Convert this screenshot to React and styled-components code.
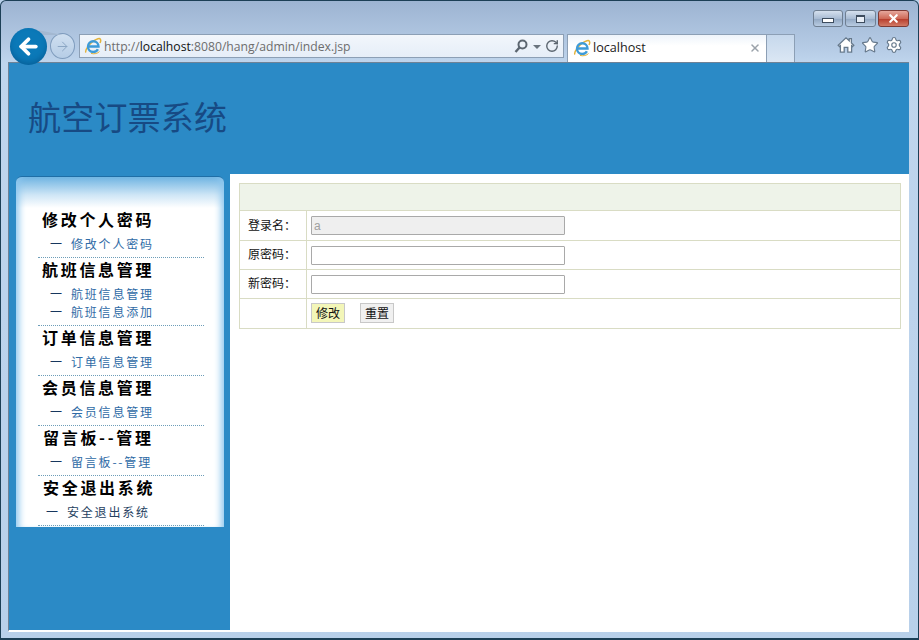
import React from 'react'
import styled, { createGlobalStyle } from 'styled-components'
import { ArrowLeft, ArrowRight, RotateCw, Settings, Star, X } from 'lucide-react'

const menu = [
    { title: '修改个人密码', links: ['修改个人密码'] },
    { title: '航班信息管理', links: ['航班信息管理', '航班信息添加'] },
    { title: '订单信息管理', links: ['订单信息管理'] },
    { title: '会员信息管理', links: ['会员信息管理'] },
    { title: '留言板--管理', links: ['留言板--管理'], nudge: 1 },
    { title: '安全退出系统', links: ['安全退出系统'], nudge: 1, linkNudge: -4, dark: true },
]

const IeLogo = ({ size = 18 }) => (
    <svg width={size} height={size} viewBox="0 0 18 18" fill="none">
        <path d="M2 15.5C0.5 13.5 6 4.5 14 1.8C16.5 1 17.5 3 16 6" stroke="#e2b33c" strokeWidth="1.5" />
        <path d="M4 9.5H14.5C14.5 6.5 12.2 4.3 9.3 4.3C6.3 4.3 4 6.7 4 9.7C4 12.8 6.3 15 9.3 15C11.3 15 13 14 13.9 12.3" stroke="#3d9bd8" strokeWidth="2.4" />
        <path d="M7 16.4C10 17.4 14 16.4 15.5 14.5" stroke="#e2b33c" strokeWidth="1" />
    </svg>
)

const HomeIcon = () => (
    <svg width="18" height="18" viewBox="0 0 18 18" fill="#fff" stroke="#66798c" strokeWidth="1.3">
        <path d="M1.2 9.2L9 1.8L12.2 4.8V2.6H14.4V6.9L16.8 9.2L15.5 10.5L14.6 9.7V16.2H10.8V11.4H7.2V16.2H3.4V9.7L2.5 10.5Z" />
    </svg>
)

export default function App() {
    return (
        <Frame>
            <GlobalStyle />
            <TitleBar>
                <WindowButton><MinGlyph /></WindowButton>
                <WindowButton $wide><MaxGlyph /></WindowButton>
                <CloseButton><X size={13} strokeWidth={4} color="#fff" /></CloseButton>
            </TitleBar>
            <NavBar>
                <BackButton><ArrowLeft size={25} strokeWidth={3.6} color="#fff" /></BackButton>
                <ForwardButton><ArrowRight size={15} strokeWidth={1.6} color="#8ba6c4" /></ForwardButton>
                <AddressBar>
                    <IeLogo />
                    <Url>http://<b>localhost</b>:8080/hang/admin/index.jsp</Url>
                    <AddressTools>
                        <svg width="16" height="16" viewBox="0 0 16 16" fill="none">
                            <circle cx="9.5" cy="6.5" r="4" stroke="#5c6670" strokeWidth="2" />
                            <path d="M6.5 9.5L2.5 14" stroke="#5c6670" strokeWidth="2.4" />
                        </svg>
                        <DropArrow />
                        <RotateCw size={14} strokeWidth={2.4} color="#5c6670" />
                    </AddressTools>
                </AddressBar>
                <Tab>
                    <IeLogo />
                    <TabTitle>localhost</TabTitle>
                    <X size={12} strokeWidth={3} color="#9aa2aa" />
                </Tab>
                <NewTab />
                <Tools>
                    <HomeIcon />
                    <Star size={18} strokeWidth={1.5} color="#66798c" fill="#fff" />
                    <Settings size={18} strokeWidth={1.5} color="#66798c" fill="#fff" />
                </Tools>
            </NavBar>
            <Page>
                <Header>航空订票系统</Header>
                <Body>
                    <Sidebar>
                        <Panel>
                            {menu.map((group) => (
                                <Group key={group.title}>
                                    <GroupTitle $nudge={group.nudge}>{group.title}</GroupTitle>
                                    {group.links.map((link) => (
                                        <SubItem key={link} $nudge={group.linkNudge}>
                                            <Dash>一</Dash>
                                            <SubLink $dark={group.dark}>{link}</SubLink>
                                        </SubItem>
                                    ))}
                                </Group>
                            ))}
                        </Panel>
                    </Sidebar>
                    <Main>
                        <FormTable>
                            <colgroup>
                                <col width="67" />
                                <col />
                            </colgroup>
                            <tbody>
                                <tr><HeadCell colSpan={2} /></tr>
                                <Row $h={30}>
                                    <LabelCell>登录名：</LabelCell>
                                    <FieldCell><TextInput value="a" disabled readOnly /></FieldCell>
                                </Row>
                                <Row $h={29}>
                                    <LabelCell>原密码：</LabelCell>
                                    <FieldCell><TextInput type="password" /></FieldCell>
                                </Row>
                                <Row $h={29}>
                                    <LabelCell>新密码：</LabelCell>
                                    <FieldCell><TextInput type="password" /></FieldCell>
                                </Row>
                                <Row $h={30}>
                                    <LabelCell />
                                    <FieldCell>
                                        <ActionButton $primary>修改</ActionButton>
                                        <ActionButton>重置</ActionButton>
                                    </FieldCell>
                                </Row>
                            </tbody>
                        </FormTable>
                    </Main>
                </Body>
            </Page>
        </Frame>
    )
}

const GlobalStyle = createGlobalStyle`
    html, body {
        margin: 0;
        padding: 0;
        width: 919px;
        height: 640px;
        overflow: hidden;
        background: #b8d0ea;
    }
`

const Frame = styled.div`
    box-sizing: border-box;
    width: 919px;
    height: 640px;
    display: flex;
    flex-direction: column;
    padding: 0 9px 6px 7px;
    border: 1px solid #1c3f56;
    border-bottom-width: 2px;
    border-radius: 6px 6px 0 0;
    margin: 0;
    background: linear-gradient(#9db4d2 0, #b4cae4 45px, #bfd5ed 62px, #b8d0ea 100%);
    font-family: "Noto Sans CJK SC", sans-serif;
`

const TitleBar = styled.div`
    height: 26px;
    flex: none;
    padding-top: 9px;
    display: flex;
    justify-content: flex-end;
    gap: 2px;
`

const WindowButton = styled.div`
    box-sizing: border-box;
    width: ${(p) => (p.$wide ? 31 : 30)}px;
    height: 17px;
    display: flex;
    align-items: center;
    justify-content: center;
    border: 1px solid #6f7f92;
    border-radius: 3px;
    background: linear-gradient(#d5e0ee, #a9bcd4 50%, #93a9c4 55%, #b9cce2);
`

const CloseButton = styled(WindowButton)`
    width: 31px;
    border-color: #7d3a34;
    background: linear-gradient(#e6a79c, #cf6a58 50%, #b83f2e 55%, #d27a66);
`

const MinGlyph = styled.span`
    width: 10px;
    height: 3px;
    margin-top: 4px;
    border: 1px solid #3d4c5e;
    background: #fff;
`

const MaxGlyph = styled.span`
    width: 7px;
    height: 5px;
    border: 1px solid #3d4c5e;
    border-top-width: 2px;
    background: #e8eef6;
`

const NavBar = styled.div`
    height: 28px;
    flex: none;
    display: flex;
    align-items: flex-start;
    margin: -2px 0 0 2px;
`

const BackButton = styled.div`
    position: relative;
    box-sizing: border-box;
    width: 37px;
    height: 37px;
    flex: none;
    margin-top: -6px;
    border-radius: 50%;
    display: flex;
    align-items: center;
    justify-content: center;
    background: #0b79b8;
    box-shadow: inset 0 -3px 5px rgba(0, 60, 110, 0.35);
    z-index: 1;
`

const ForwardButton = styled.div`
    position: relative;
    box-sizing: border-box;
    width: 25px;
    height: 26px;
    flex: none;
    margin: -1px 4px 0 3px;
    border-radius: 50%;
    display: flex;
    align-items: center;
    justify-content: center;
    border: 1px solid #7f9cbd;
    background: linear-gradient(#cfdff0, #b6cde6);

    &::before {
        content: '';
        position: absolute;
        left: -24px;
        top: -6px;
        width: 36px;
        height: 7px;
        background: #a3b8d1;
        clip-path: polygon(0 0, 100% 100%, 0 100%);
    }
`

const AddressBar = styled.div`
    box-sizing: border-box;
    width: 485px;
    height: 24px;
    flex: none;
    display: flex;
    align-items: center;
    gap: 2px;
    padding: 0 4px 0 4px;
    border: 1px solid #8c9fb5;
    background: linear-gradient(#f2f6fb, #e6eef8);
`

const Url = styled.span`
    flex: 1;
    font: 12.2px "Open Sans", sans-serif;
    color: #6d6d6d;

    b {
        font-weight: 400;
        color: #111;
    }
`

const AddressTools = styled.div`
    display: flex;
    align-items: center;
    gap: 4px;
`

const DropArrow = styled.span`
    width: 0;
    height: 0;
    margin-top: 2px;
    border-left: 4px solid transparent;
    border-right: 4px solid transparent;
    border-top: 4px solid #6a747e;
`

const Tab = styled.div`
    box-sizing: border-box;
    width: 200px;
    height: 28px;
    flex: none;
    margin-left: 3px;
    padding: 0 5px 2px 5px;
    display: flex;
    align-items: center;
    gap: 2px;
    border: 1px solid #8c9fb5;
    border-bottom: 0;
    background: linear-gradient(#eef4fb, #fff 40%);
`

const TabTitle = styled.span`
    flex: 1;
    font: 12.6px "Open Sans", sans-serif;
    color: #1a1a1a;
`

const NewTab = styled.div`
    box-sizing: border-box;
    width: 28px;
    height: 28px;
    flex: none;
    border: 1px solid #8c9fb5;
    border-left: 0;
    border-bottom: 0;
    background: linear-gradient(#c6d8ec, #dbe7f4);
`

const Tools = styled.div`
    display: flex;
    align-items: center;
    gap: 6px;
    height: 22px;
    margin-left: 42px;
`

const Page = styled.div`
    flex: 1;
    min-height: 0;
    display: flex;
    flex-direction: column;
    border-top: 1px solid #6f8296;
    border-left: 1px solid #6f8296;
    border-bottom: 2px solid #fff;
`

const Header = styled.div`
    box-sizing: border-box;
    height: 111px;
    flex: none;
    padding: 29px 0 0 19px;
    background: #2b8ac6;
    color: #174a84;
    font-size: 33px;
    font-weight: 400;
    line-height: 48px;
    letter-spacing: 0.2px;
`

const Body = styled.div`
    flex: 1;
    min-height: 0;
    display: flex;
`

const Sidebar = styled.div`
    box-sizing: border-box;
    width: 221px;
    flex: none;
    padding: 2px 6px 0 7px;
    background: #2b8ac6;
`

const Panel = styled.div`
    box-sizing: border-box;
    width: 208px;
    height: 351px;
    padding: 31px 20px 0 22px;
    border-radius: 6px 6px 0 0;
    border-top: 1px solid #1f6ea6;
    background: linear-gradient(#6fb4e2, #cfe6f6 18px, #fff 31px);
    box-shadow: inset 8px 0 7px -5px #8cc6ee, inset -8px 0 7px -5px #8cc6ee;
`

const Group = styled.div`
    display: flex;
    flex-direction: column;
    padding-bottom: 4px;
    border-bottom: 1px dotted #6d9db8;
`

const GroupTitle = styled.div`
    height: 26px;
    margin-left: ${(p) => 4 + (p.$nudge || 0)}px;
    font-size: 16px;
    font-weight: 700;
    line-height: 22px;
    letter-spacing: 2.7px;
    color: #000;
    white-space: nowrap;
`

const SubItem = styled.div`
    height: 18px;
    display: flex;
    align-items: center;
    margin-left: ${(p) => 12 + (p.$nudge || 0)}px;
    font-size: 12px;
    line-height: 18px;

    &:nth-child(2) {
        margin-top: 1px;
    }
`

const Dash = styled.span`
    width: 21px;
    flex: none;
    color: #17375e;
`

const SubLink = styled.span`
    letter-spacing: 1.8px;
    color: ${(p) => (p.$dark ? '#25415f' : '#2f6ba6')};
    white-space: nowrap;
`

const Main = styled.div`
    flex: 1;
    padding: 9px 8px 0 9px;
    background: #fff;
`

const FormTable = styled.table`
    width: 662px;
    border-collapse: collapse;
    table-layout: fixed;
    font-size: 12px;
    color: #111;
`

const HeadCell = styled.td`
    height: 26px;
    padding: 0;
    border: 1px solid #d9dcc4;
    background: #eef3e9;
`

const Row = styled.tr`
    height: ${(p) => p.$h}px;
`

const LabelCell = styled.td`
    padding: 0 0 3px 8px;
    border: 1px solid #d9dcc4;
    white-space: nowrap;
`

const FieldCell = styled.td`
    padding: 0 0 0 4px;
    border: 1px solid #d9dcc4;
`

const TextInput = styled.input`
    box-sizing: border-box;
    display: block;
    width: 254px;
    height: 19px;
    padding: 0 2px;
    border: 1px solid #a9a9a9;
    border-radius: 1px;
    background: #fff;
    font: 12px "Liberation Sans", sans-serif;

    &:disabled {
        background: #efefef;
        color: #a0a0a0;
    }
`

const ActionButton = styled.button`
    box-sizing: border-box;
    width: 34px;
    height: 20px;
    padding: 0;
    margin: 0 15px 2px 0;
    vertical-align: middle;
    border: 1px solid #c8c8c8;
    background: ${(p) => (p.$primary ? '#f3f6b8' : '#f0f0f0')};
    color: #111;
    font: 12px/16px "Noto Sans CJK SC", sans-serif;
`
